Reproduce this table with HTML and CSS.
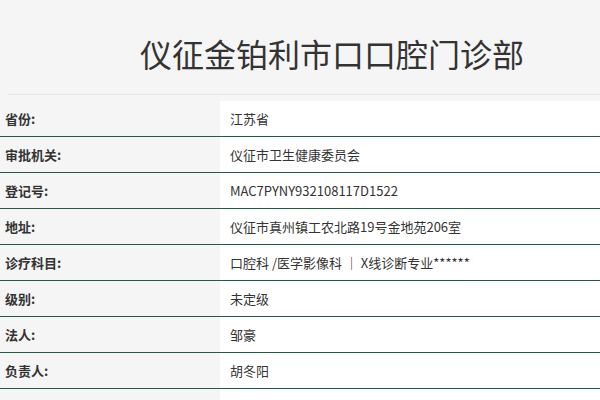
FILE: index.html
```html
<!DOCTYPE html>
<html lang="zh-CN">
<head>
<meta charset="utf-8">
<title>仪征金铂利市口口腔门诊部</title>
<link rel="stylesheet" href="styles.css">
</head>
<body>
<div class="header">
  <h1 class="title">仪征金铂利市口口腔门诊部</h1>
</div>
<table class="info">
  <tr><th>省份:</th><td>江苏省</td></tr>
  <tr><th>审批机关:</th><td>仪征市卫生健康委员会</td></tr>
  <tr><th>登记号:</th><td>MAC7PYNY932108117D1522</td></tr>
  <tr><th>地址:</th><td>仪征市真州镇工农北路19号金地苑206室</td></tr>
  <tr><th>诊疗科目:</th><td>口腔科 /医学影像科 ｜ X线诊断专业******</td></tr>
  <tr><th>级别:</th><td>未定级</td></tr>
  <tr><th>法人:</th><td>邹豪</td></tr>
  <tr><th>负责人:</th><td>胡冬阳</td></tr>
  <tr><th></th><td></td></tr>
</table>
</body>
</html>
```
FILE: styles.css
```css
html, body {
  margin: 0;
  padding: 0;
  background: #f5f5f5;
  font-family: "Noto Sans CJK SC", "Noto Sans", sans-serif;
  color: #333;
}
.header {
  margin-left: 8px;
  height: 95px;
  border-bottom: 1px solid #e6e6e6;
  box-sizing: border-box;
}
.title {
  margin: 0;
  padding: 32px 0 0 132px;
  font-size: 32px;
  font-weight: normal;
  line-height: 42px;
  color: #333;
}
.info {
  margin-top: 6px;
  width: 100%;
  border-collapse: collapse;
  font-size: 13px;
}
.info th, .info td {
  height: 35px;
  padding: 0;
  border-bottom: 1px solid #235c46;
  text-align: left;
  vertical-align: middle;
  line-height: 18px;
}
.info th {
  width: 220px;
  padding-left: 5px;
  box-sizing: border-box;
  background: #f5f5f5;
  font-weight: bold;
}
.info td {
  background: #fff;
  padding-left: 10px;
  font-weight: normal;
}
```
